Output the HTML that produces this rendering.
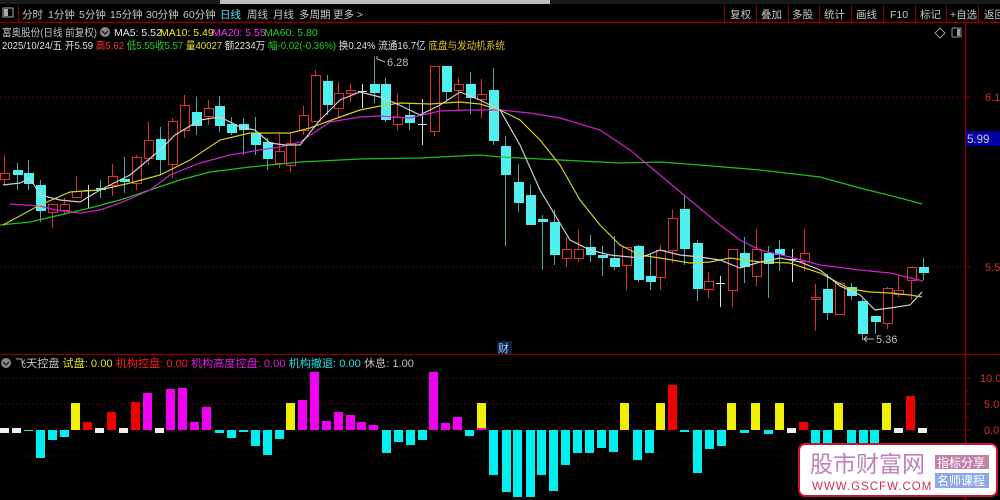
<!DOCTYPE html>
<html><head><meta charset="utf-8">
<style>
html,body{margin:0;padding:0;background:#000;width:1000px;height:500px;overflow:hidden}
svg{display:block}
text{font-family:"Liberation Sans","Noto Sans CJK SC",sans-serif}
</style></head>
<body>
<svg id="s" width="1000" height="500" xmlns="http://www.w3.org/2000/svg">
<rect width="1000" height="500" fill="#000"/>
<rect x="0" y="0" width="1000" height="4" fill="#1a1a1a"/>
<rect x="220" y="0" width="330" height="4" fill="#bdbdbd"/>
<line x1="0" y1="22.5" x2="1000" y2="22.5" stroke="#8b0000" stroke-width="1.5"/>
<line x1="965.5" y1="22" x2="965.5" y2="500" stroke="#8b0000" stroke-width="1.5"/>
<line x1="0" y1="354.5" x2="1000" y2="354.5" stroke="#8b0000" stroke-width="1.2"/>
<!-- toolbar -->
<rect x="3" y="8" width="10" height="9" fill="none" stroke="#aaa"/><rect x="4" y="9" width="4" height="7" fill="#aaa"/>
<line x1="18.5" y1="5" x2="18.5" y2="22" stroke="#8b0000"/>
<g font-size="10.5" fill="#c8c8c8">
<text x="22" y="18">分时</text><text x="48" y="18">1分钟</text><text x="79" y="18">5分钟</text><text x="110" y="18">15分钟</text><text x="146" y="18">30分钟</text><text x="183" y="18">60分钟</text><text x="220" y="18" fill="#55e0ff">日线</text><text x="247" y="18">周线</text><text x="273" y="18">月线</text><text x="299" y="18">多周期</text><text x="333" y="18">更多 &gt;</text>
<text x="730" y="18">复权</text><text x="761" y="18">叠加</text><text x="792" y="18">多股</text><text x="824" y="18">统计</text><text x="856" y="18">画线</text><text x="890" y="18">F10</text><text x="920" y="18">标记</text><text x="950" y="18">+自选</text><text x="984" y="18">返回</text>
</g>
<g stroke="#8b0000"><line x1="724.5" y1="5" x2="724.5" y2="22"/><line x1="756.5" y1="5" x2="756.5" y2="22"/><line x1="788.5" y1="5" x2="788.5" y2="22"/><line x1="819.5" y1="5" x2="819.5" y2="22"/><line x1="851.5" y1="5" x2="851.5" y2="22"/><line x1="883.5" y1="5" x2="883.5" y2="22"/><line x1="915.5" y1="5" x2="915.5" y2="22"/><line x1="946.5" y1="5" x2="946.5" y2="22"/><line x1="978.5" y1="5" x2="978.5" y2="22"/></g>
<!-- info -->
<g font-size="10.5">
<text x="2" y="36" fill="#c0c0c0" textLength="95" lengthAdjust="spacingAndGlyphs">富奥股份(日线 前复权)</text>
<circle cx="105" cy="32" r="5" fill="#888"/><path d="M102 31l3 3 3-3" stroke="#222" fill="none" stroke-width="1.4"/>
<text x="114" y="36" fill="#e8e8e8">MA5: 5.52</text><text x="160" y="36" fill="#f0f000">MA10: 5.49</text><text x="212" y="36" fill="#ff30ff">MA20: 5.55</text><text x="264" y="36" fill="#20d020">MA60: 5.80</text>
<text x="2" y="49" fill="#e0e0e0" textLength="503" lengthAdjust="spacingAndGlyphs">2025/10/24/五 开5.59 <tspan fill="#ff3030">高5.62</tspan> <tspan fill="#20d020">低5.55</tspan><tspan fill="#20d020">收5.57</tspan> <tspan fill="#e0e030">量40027</tspan> 额2234万 <tspan fill="#20d020">幅-0.02(-0.36%)</tspan> 换0.24% 流通16.7亿 <tspan fill="#e0c020">底盘与发动机系统</tspan></text>
</g>
<path d="M940 28l5 5-5 5-5-5z" fill="none" stroke="#999"/>
<rect x="952" y="28" width="9" height="9" rx="1" fill="none" stroke="#999"/><rect x="957" y="29" width="3" height="7" fill="#999"/>
<!-- grid -->
<g stroke="#8b0000" stroke-dasharray="1,3"><line x1="0" y1="97" x2="965" y2="97"/><line x1="0" y1="267" x2="965" y2="267"/>
<line x1="0" y1="378" x2="965" y2="378"/><line x1="0" y1="404" x2="965" y2="404"/><line x1="0" y1="430" x2="965" y2="430"/><line x1="0" y1="456" x2="965" y2="456"/></g>
<g font-size="11" fill="#d03030"><text x="985" y="101">6.1</text><text x="985" y="271">5.5</text>
<text x="980" y="382">10.0</text><text x="984" y="408">5.0</text><text x="984" y="434">0.0</text></g>
<g stroke="#8b0000"><line x1="965" y1="97" x2="970" y2="97"/><line x1="965" y1="267" x2="970" y2="267"/><line x1="965" y1="378" x2="970" y2="378"/><line x1="965" y1="404" x2="970" y2="404"/><line x1="965" y1="430" x2="970" y2="430"/><line x1="965" y1="391" x2="968" y2="391"/><line x1="965" y1="417" x2="968" y2="417"/></g>
<rect x="966" y="131" width="34" height="15" fill="#0000a0"/><text x="967" y="143" font-size="11.5" fill="#ccd">5.99</text>
<g id="cand"></g>
<g fill="none" stroke-width="1.2">
<polyline stroke="#20c020" points="0,225 30,222 60,215 90,208 120,200 150,190 180,180 210,172 250,167 300,162 360,159 420,158 480,155 500,157 560,160 620,163 660,162 700,165 760,170 820,177 860,188 900,198 922,204"/>
<polyline stroke="#d020d0" points="10,204 40,206 55,210 80,213 100,210 120,203 150,190 170,175 200,163 230,155 260,150 280,147 300,142 330,122 360,117 380,116 410,118 440,111 470,110 500,110 530,113 560,118 600,130 630,150 660,175 690,200 720,225 740,240 760,250 790,257 820,265 860,270 890,273 923,281"/>
<polyline stroke="#d0d020" points="3,225 40,205 70,192 100,190 130,183 160,175 190,160 220,140 250,133 290,133 310,128 340,117 360,110 380,106 400,103 430,104 460,102 480,104 500,110 520,120 540,140 560,165 580,200 600,225 620,245 640,255 660,258 690,263 710,262 730,258 760,262 790,263 820,273 850,289 870,292 890,293 910,295 922,297"/>
<polyline stroke="#d0d0d0" points="3,185 20,183 30,178 40,195 60,200 80,202 100,190 130,175 160,150 175,135 200,120 220,117 240,127 255,130 270,143 285,145 300,145 320,120 340,100 360,92 380,97 395,103 420,115 440,105 460,92 480,100 500,110 520,145 540,190 555,215 570,240 590,250 610,255 640,258 660,250 680,255 700,257 720,260 740,268 760,262 780,258 800,262 820,270 840,286 860,295 875,310 890,308 910,305 922,292"/>
</g>
<g font-size="11" fill="#c0c0c0"><text x="387" y="66">6.28</text><text x="876" y="343">5.36</text></g>
<path d="M385 62l-8-3 0-3" stroke="#c0c0c0" fill="none"/><path d="M874 339h-10l3-3m-3 3l3 3" stroke="#c0c0c0" fill="none"/>
<rect x="497" y="341" width="15" height="13" fill="#102040"/><text x="498" y="352" font-size="11" fill="#9cf">财</text>
<!-- indicator title -->
<circle cx="6" cy="363" r="5" fill="#888"/><path d="M3 362l3 3 3-3" stroke="#222" fill="none" stroke-width="1.4"/>
<g font-size="11"><text x="15" y="367" fill="#c0c0c0" textLength="399" lengthAdjust="spacingAndGlyphs">飞天控盘 <tspan fill="#e0e030">试盘: 0.00</tspan> <tspan fill="#ff2020">机构控盘: 0.00</tspan> <tspan fill="#e020e0">机构高度控盘: 0.00</tspan> <tspan fill="#20e0e0">机构撤退: 0.00</tspan> 休息: 1.00</text></g>
<g id="ind"></g>
<!-- watermark -->
<rect x="799" y="444" width="198" height="52" rx="6" fill="#fff" stroke="#d01030" stroke-width="2"/>
<text x="810" y="472" font-size="23" fill="#c080c0" font-family="Liberation Serif,'Noto Serif CJK SC',serif">股市财富网</text>
<text x="812" y="490" font-size="11.5" fill="#d03050" font-family="Liberation Serif,serif" letter-spacing="1">WWW.GSCFW.COM</text>
<rect x="935" y="455" width="54" height="14" fill="#c080a8"/><text x="937" y="467" font-size="12" fill="#fff">指标分享</text>
<rect x="935" y="473" width="54" height="15" fill="#8aa8e8"/><text x="937" y="485" font-size="12" fill="#fff">名师课程</text>
</svg>
<script>
var C=[[4,155,173,179,185,'r'],[17,163,170,175,190,'c'],[28,160,173,184,190,'c'],[40,180,185,211,222,'c'],[52,204,204,212,228,'r'],[64,198,204,210,215,'r'],[76,176,191,197,198,'r'],[88,185,190,190,209,'w'],[100,180,188,190,198,'c'],[112,164,176,185,196,'r'],[124,157,179,182,193,'c'],[136,155,157,183,190,'r'],[148,122,140,158,165,'r'],[160,127,139,160,175,'c'],[172,118,121,164,178,'r'],[184,95,105,130,138,'r'],[196,97,112,126,135,'c'],[208,100,108,116,125,'r'],[219,96,106,126,132,'c'],[231,117,124,133,135,'c'],[243,118,124,130,155,'c'],[255,117,133,145,155,'c'],[267,138,142,159,170,'c'],[279,133,151,163,168,'r'],[290,133,143,165,172,'r'],[303,106,115,130,135,'r'],[315,70,75,121,120,'r'],[327,75,81,105,115,'c'],[338,82,93,108,118,'r'],[350,84,90,93,102,'r'],[362,84,91,91,108,'w'],[374,57,84,93,103,'c'],[385,78,84,120,122,'c'],[397,94,117,124,130,'r'],[409,103,115,123,130,'c'],[422,99,124,124,145,'w'],[434,66,66,131,136,'r'],[446,66,66,92,102,'c'],[458,78,84,90,110,'r'],[470,72,84,98,114,'c'],[481,79,94,99,118,'r'],[493,68,90,141,145,'c'],[505,136,146,175,246,'c'],[518,164,182,203,212,'c'],[530,185,195,225,225,'c'],[542,215,219,222,270,'c'],[554,210,222,255,265,'c'],[566,237,249,258,267,'r'],[578,230,249,258,262,'r'],[590,235,247,255,262,'c'],[602,246,255,258,276,'c'],[614,236,258,267,270,'c'],[626,247,247,265,290,'r'],[638,245,246,280,282,'c'],[650,254,276,282,290,'c'],[660,245,250,277,290,'r'],[672,210,218,250,263,'r'],[684,195,209,249,265,'c'],[697,240,243,289,301,'c'],[708,272,281,289,298,'r'],[720,276,283,283,307,'w'],[732,249,249,290,307,'r'],[744,237,253,267,283,'c'],[756,229,249,276,286,'r'],[768,246,253,264,298,'c'],[779,240,249,255,271,'c'],[792,249,259,259,282,'w'],[804,229,253,261,271,'r'],[815,284,297,299,331,'r'],[827,274,289,313,320,'c'],[839,283,283,314,314,'r'],[851,283,287,296,300,'c'],[862,299,301,334,340,'c'],[875,316,316,322,334,'c'],[887,287,288,323,329,'r'],[898,275,290,294,297,'r'],[911,267,267,280,300,'r'],[923,258,267,273,280,'c']];
var h='';C.forEach(function(c){var x=c[0],col=c[5]=='r'?'#e03030':c[5]=='c'?'#50f0f0':'#e0e0e0';
var wc=c[5]=='c'?'#4aa8a8':col;
h+='<line x1="'+(x+.5)+'" y1="'+c[1]+'" x2="'+(x+.5)+'" y2="'+c[4]+'" stroke="'+wc+'"/>';
var bh=Math.max(c[3]-c[2],1);
if(c[5]=='r')h+='<rect x="'+(x-4)+'.5" y="'+c[2]+'.5" width="9" height="'+bh+'" fill="#000" stroke="'+col+'"/>';
else if(c[5]=='c')h+='<rect x="'+(x-4)+'" y="'+c[2]+'" width="10" height="'+bh+'" fill="'+col+'"/>';
else h+='<line x1="'+(x-4)+'" y1="'+c[2]+'.5" x2="'+(x+5)+'" y2="'+c[2]+'.5" stroke="'+col+'"/>';});
document.getElementById('cand').innerHTML=h;
var Y='#f0f000',R='#f00000',M='#f000f0',Cy='#00f0f0',W='#f0f0f0';
var B=[[0,W,428,433],[12,W,428,433],[24,Cy,430,431],[36,Cy,430,458],[48,Cy,430,440],[60,Cy,430,437],[71,Y,403,430],[83,R,422,430],[95,W,428,433],[107,R,412,430],[119,W,428,433],[131,R,402,430],[143,M,393,430],[155,W,428,433],[166,M,389,430],[178,M,388,430],[190,M,422,430],[202,M,407,430],[215,Cy,430,433],[227,Cy,430,438],[239,Cy,430,432],[251,Cy,430,446],[263,Cy,430,455],[275,Cy,430,439],[286,Y,403,430],[298,M,400,430],[310,M,372,430],[322,M,421,430],[334,M,412,430],[346,M,415,430],[357,M,422,430],[369,M,425,430],[382,Cy,430,453],[394,Cy,430,442],[406,Cy,430,445],[418,Cy,430,440],[429,M,372,430],[441,M,423,430],[453,M,417,430],[465,Cy,430,436],[477,Y,403,430],[489,Cy,430,475],[502,Cy,430,492],[513,Cy,430,497],[526,Cy,430,497],[537,Cy,430,475],[549,Cy,430,491],[561,Cy,430,465],[573,Cy,430,453],[585,Cy,430,453],[597,Cy,430,448],[609,Cy,430,452],[620,Y,403,430],[633,Cy,430,460],[645,Cy,430,453],[656,Y,403,430],[668,R,385,430],[680,Cy,430,432],[693,Cy,430,473],[705,Cy,430,449],[717,Cy,430,446],[727,Y,403,430],[740,Cy,430,433],[751,Y,403,430],[764,Cy,430,434],[775,Y,403,430],[787,W,428,433],[799,R,422,430],[811,Cy,430,445],[823,Cy,430,445],[834,Y,403,430],[847,Cy,430,445],[859,Cy,430,445],[870,Cy,430,445],[882,Y,403,430],[894,W,428,433],[906,R,396,430],[918,W,428,433]];
var g='';B.forEach(function(b){g+='<rect x="'+b[0]+'" y="'+b[2]+'" width="9" height="'+(b[3]-b[2])+'" fill="'+b[1]+'"/>';});
g+='<rect x="477" y="428" width="9" height="2" fill="'+M+'"/>';
document.getElementById('ind').innerHTML=g;
</script>
</body></html>
